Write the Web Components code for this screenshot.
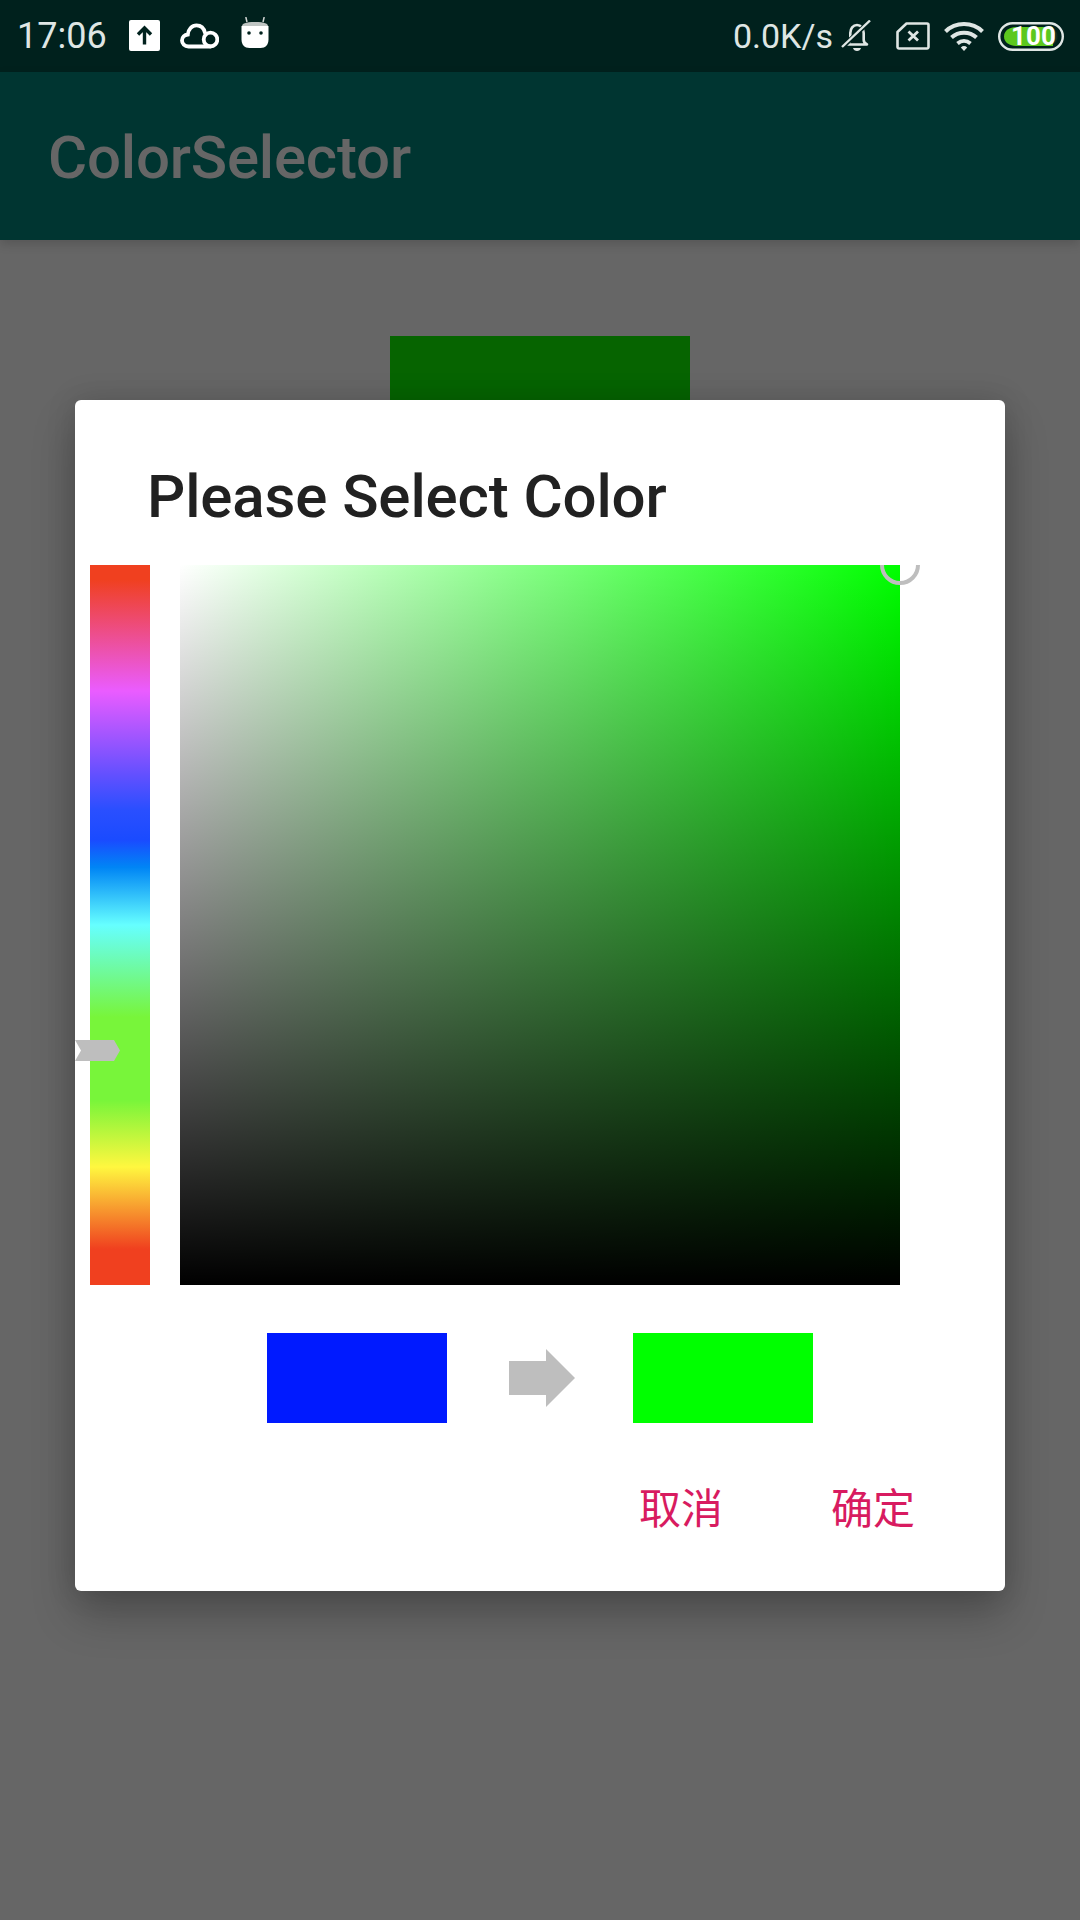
<!DOCTYPE html>
<html>
<head>
<meta charset="utf-8">
<title>ColorSelector</title>
<style>
  html, body { margin: 0; padding: 0; background: #666; }
  body { width: 1080px; height: 1920px; overflow: hidden; font-family: Roboto, "Noto Sans CJK SC", sans-serif; }
</style>
</head>
<body>
<app-screen>
  <status-bar slot="status"></status-bar>
  <app-bar slot="bar">ColorSelector</app-bar>
  <color-dialog slot="dialog" heading="Please Select Color">
    <color-picker></color-picker>
    <color-compare></color-compare>
    <dialog-button>取消</dialog-button>
    <dialog-button>确定</dialog-button>
  </color-dialog>
</app-screen>

<script>
// PAGE FRAME: BARS, DIMMED CONTENT AND THE MODAL OVER IT
class AppScreen extends HTMLElement {
    constructor() {
        super();
        this.attachShadow({ mode: 'open' });
        this.shadowRoot.innerHTML = `
            <style>
                :host { display: block; position: relative; width: 1080px; height: 1920px; background: #666; overflow: hidden; }
                .content { display: flex; justify-content: center; padding-top: 96px; }
                .preview { width: 300px; height: 300px; background: #066400; }
                .modal { position: absolute; left: 75px; top: 400px; }
            </style>
            <slot name="status"></slot>
            <slot name="bar"></slot>
            <div class="content"><div class="preview"></div></div>
            <div class="modal"><slot name="dialog"></slot></div>
        `;
    }
}

// ANDROID STATUS BAR WITH ITS ICONS
class StatusBar extends HTMLElement {
    constructor() {
        super();
        this.attachShadow({ mode: 'open' });
        this.shadowRoot.innerHTML = `
            <style>
                :host { display: flex; align-items: center; justify-content: space-between; height: 72px; box-sizing: border-box;
                        padding: 0 16px 0 17px; background: #00211d; color: #dfe6e4; font: 400 34px Roboto, sans-serif; }
                .side { display: flex; align-items: center; }
                .time { font-size: 36px; }
                svg { display: block; flex: none; }
                .battery { position: relative; width: 66px; height: 29px; margin-left: 14px; }
                .battery b { position: absolute; left: 5px; right: 0; top: 0; text-align: center; color: #fff;
                             font: 700 26px/29px Roboto, sans-serif; letter-spacing: 0; }
            </style>
            <div class="side">
                <span class="time">17:06</span>
                <svg style="margin-left:22px;margin-top:-1px" width="31" height="31" viewBox="0 0 31 31">
                    <rect width="31" height="31" rx="2" fill="#fff"/>
                    <path d="M15.5 24.5V9M9 14.5l6.5-6.5 6.5 6.5" fill="none" stroke="#00211d" stroke-width="3.4"/>
                </svg>
                <svg style="margin-left:20px;margin-top:-1px" width="39" height="26" viewBox="0 0 39 26">
                    <path d="M30.500 23.500H8.500C4.500 23.500 2 20.500 2 17.500C2 14.300 4.500 11.900 7.800 11.500C8.200 6.300 12 2.300 16.500 2.300C20.800 2.300 24 5.300 25 9.800" fill="none" stroke="#fff" stroke-width="3.800" stroke-linecap="round"/>
                    <circle cx="30.500" cy="16.500" r="6.800" fill="none" stroke="#fff" stroke-width="3.800"/>
                </svg>
                <svg style="margin-left:22px;margin-top:-6px" width="28" height="32" viewBox="0 0 28 32">
                    <path d="M6 5L4.800 0M22 5L23.200 0" stroke="#cfd4d2" stroke-width="1.500"/>
                    <path d="M1 9.500C1 6.500 4 5 14 5S27 6.500 27 9.500z" fill="#bfc5c3"/>
                    <path d="M0.500 9H27.500V22.500C27.500 27.500 24.500 31 19.500 31H8.500C3.500 31 0.500 27.500 0.500 22.500z" fill="#fff"/>
                    <circle cx="8" cy="16" r="1.800" fill="#00211d"/><circle cx="20" cy="16" r="1.800" fill="#00211d"/>
                </svg>
            </div>
            <div class="side">
                <span>0.0K/s</span>
                <svg style="margin-left:8px" width="32" height="32" viewBox="0 0 32 32">
                    <path d="M7 24.500c1.500-2 2.300-3.500 2.300-7v-4.500C9.300 8.500 12 5 16 5s6.700 3.500 6.700 8v7c0 1.500.9 3.200 3.300 4.500z" fill="none" stroke="#dfe6e4" stroke-width="2.600" stroke-linejoin="round"/>
                    <path d="M2 26.500L29 1" stroke="#00211d" stroke-width="4.500"/>
                    <path d="M1 27L29 0.500" stroke="#dfe6e4" stroke-width="2.400"/>
                    <path d="M12 28h8c-.5 1.800-2 3-4 3s-3.500-1.200-4-3z" fill="#dfe6e4"/>
                </svg>
                <svg style="margin-left:23px" width="34" height="28" viewBox="0 0 34 28">
                    <path d="M10.500 1.500H31a1.500 1.500 0 0 1 1.500 1.500V25a1.500 1.500 0 0 1-1.500 1.500H3A1.500 1.500 0 0 1 1.500 25V10z" fill="none" stroke="#dfe6e4" stroke-width="2.600" stroke-linejoin="round"/>
                    <path d="M12.500 9.500L22 18.500M22 9.500L12.500 18.500" stroke="#dfe6e4" stroke-width="2.800"/>
                </svg>
                <svg style="margin-left:14px" width="40" height="29" viewBox="0 0 40 29">
                    <path d="M1.500 9.500C11.500-.5 28.500-.5 38.500 9.500M7.500 15.500C14.500 9 25.500 9 32.500 15.500" fill="none" stroke="#dfe6e4" stroke-width="4"/>
                    <path d="M13.500 21.500C17.500 18 22.500 18 26.500 21.500" fill="none" stroke="#dfe6e4" stroke-width="3.800"/>
                    <path d="M16.800 25.500a4.800 4.800 0 0 1 6.400 0L20 29z" fill="#dfe6e4"/>
                </svg>
                <div class="battery">
                    <svg width="66" height="29" viewBox="0 0 66 29">
                        <rect x="1.200" y="1.200" width="63.600" height="26.600" rx="13.300" fill="none" stroke="#dfe6e4" stroke-width="2.400"/>
                        <path d="M18 5H50.500C55.500 5 59.500 9 59.500 14.500S55.500 24 50.500 24H18C12 24 6 20.500 6 14.500S12 5 18 5z" fill="#14301f"/>
                        <path d="M18 5H55V24H18C12 24 6 20.500 6 14.500S12 5 18 5z" fill="#5cc81e"/>
                    </svg>
                    <b>100</b>
                </div>
            </div>
        `;
    }
}

// TOOLBAR WITH THE APP TITLE
class AppBar extends HTMLElement {
    constructor() {
        super();
        this.attachShadow({ mode: 'open' });
        this.shadowRoot.innerHTML = `
            <style>
                :host { display: flex; align-items: center; height: 168px; box-sizing: border-box; padding: 2px 0 0 48px;
                        background: #003531; color: #666; font: 500 60px Roboto, sans-serif; letter-spacing: -0.2px;
                        box-shadow: 0 4px 10px rgba(0,0,0,.16); position: relative; }
            </style>
            <slot></slot>
        `;
    }
}

// DIALOG CARD: TITLE, BODY CONTENT AND A ROW OF ACTION BUTTONS
class ColorDialog extends HTMLElement {
    constructor() {
        super();
        this.attachShadow({ mode: 'open' });
        this.shadowRoot.innerHTML = `
            <style>
                :host { display: flex; flex-direction: column; width: 930px; height: 1191px; box-sizing: border-box;
                        background: #fff; border-radius: 6px; box-shadow: 0 24px 44px rgba(0,0,0,.24), 0 0 30px rgba(0,0,0,.14); }
                h1 { margin: 0; padding: 48px 0 0 72px; height: 165px; box-sizing: border-box; color: #212121;
                     font: 500 60px/98px Roboto, sans-serif; letter-spacing: -0.12px; }
                .actions { display: flex; justify-content: flex-end; gap: 108px; padding: 55px 90px 0 0; }
            </style>
            <h1></h1>
            <slot></slot>
            <div class="actions"><slot name="action"></slot></div>
        `;
        this.shadowRoot.querySelector('h1').textContent = this.getAttribute('heading');
    }

    connectedCallback() {
        this.querySelectorAll('dialog-button').forEach(btn => btn.setAttribute('slot', 'action'));
    }
}

// HUE BAR AND SATURATION/VALUE SQUARE WITH THEIR HANDLES
class ColorPicker extends HTMLElement {
    constructor() {
        super();
        this.attachShadow({ mode: 'open' });
        this.shadowRoot.innerHTML = `
            <style>
                :host { display: flex; gap: 30px; height: 720px; padding-left: 15px; }
                .hue { position: relative; width: 60px; height: 720px;
                       background: linear-gradient(to bottom,
                           #f0401f 0%, #f0401f 2%, #ea5cff 17.500%, #6450ff 29%, #2a4fff 34%, #1a4bff 38.200%, #0085f5 42%, #66ffff 50%,
                           #78f53a 62.800%, #78f53a 74.300%, #fff73f 83.600%, #f0401f 95%, #f0401f 100%); }
                .thumb { position: absolute; left: -15px; top: 475px; width: 45px; height: 21px; background: #bebebe;
                         clip-path: polygon(0 0, 39px 0, 45px 50%, 39px 100%, 0 100%, 6px 50%); }
                .field { position: relative; width: 745px; height: 720px; overflow: hidden; }
                .square { width: 720px; height: 720px;
                          background: linear-gradient(to bottom, rgba(0,0,0,0), #000), linear-gradient(to right, #fff, #0f0); }
                .ring { position: absolute; left: 700px; top: -20px; width: 40px; height: 40px; box-sizing: border-box;
                        border: 4px solid #bebebe; border-radius: 50%; }
            </style>
            <div class="hue"><div class="thumb"></div></div>
            <div class="field"><div class="square"></div><div class="ring"></div></div>
        `;
    }
}

// OLD COLOUR -> NEW COLOUR
class ColorCompare extends HTMLElement {
    constructor() {
        super();
        this.attachShadow({ mode: 'open' });
        this.shadowRoot.innerHTML = `
            <style>
                :host { display: flex; align-items: center; height: 90px; margin-top: 48px; padding-left: 192px; }
                .swatch { width: 180px; height: 90px; }
                svg { display: block; margin: 0 58px 0 62px; }
            </style>
            <div class="swatch" style="background:#001aff"></div>
            <svg width="66" height="58" viewBox="0 0 66 58"><path d="M0 12H37V0L66 29 37 58V46H0z" fill="#bebebe"/></svg>
            <div class="swatch" style="background:#0f0"></div>
        `;
    }
}

// TEXT BUTTON IN THE DIALOG FOOTER
class DialogButton extends HTMLElement {
    constructor() {
        super();
        this.attachShadow({ mode: 'open' });
        this.shadowRoot.innerHTML = `
            <style>
                :host { display: block; color: #d81b60; font: 400 42px/56px "Noto Sans CJK SC", sans-serif; }
            </style>
            <slot></slot>
        `;
    }
}

customElements.define('app-screen', AppScreen);
customElements.define('status-bar', StatusBar);
customElements.define('app-bar', AppBar);
customElements.define('color-dialog', ColorDialog);
customElements.define('color-picker', ColorPicker);
customElements.define('color-compare', ColorCompare);
customElements.define('dialog-button', DialogButton);
</script>
</body>
</html>
